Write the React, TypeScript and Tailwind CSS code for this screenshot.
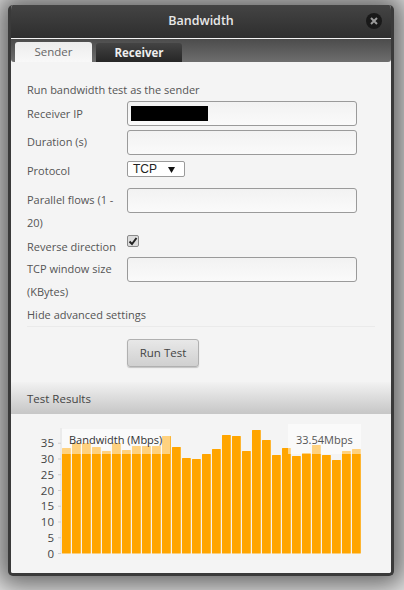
import { ReactNode } from 'react'

const tops = [448, 443, 443, 447, 451, 443, 450, 446, 446, 446, 436, 447, 458, 459, 454, 449, 435, 436, 451, 430, 440, 455, 448, 456, 453, 445, 455, 460, 451, 449]
const ticks = [0, 5, 10, 15, 20, 25, 30, 35]

function Field() {
  return <div className="h-[25px] w-[230px] rounded-[3px] border border-[#9a9a9a] bg-gradient-to-b from-[#f2f2f2] via-[#f6f6f6] to-[#fafafa]" />
}

function Row({ label, children, className }: { label: ReactNode; children: ReactNode; className?: string }) {
  return (
    <div className={`flex items-start ${className ?? ''}`}>
      <div className="w-[100px] shrink-0 pb-px leading-[23px]">{label}</div>
      {children}
    </div>
  )
}

function Chart() {
  return (
    <div className="relative h-[159px] bg-[#f4f4f4]">
      <svg width="380" height="159" viewBox="11 414 380 159" className="block">
        <line x1="61" y1="428" x2="61" y2="554" stroke="#e2e2e2" />
        {ticks.map((t) => {
          const y = 553.5 - t * 3.15
          return (
            <g key={t}>
              <line x1="58" y1={y} x2="61" y2={y} stroke="#cfcfcf" />
              <text x="54" y={y + 4} textAnchor="end" fontSize="11.5" fill="#444" fontFamily="Open Sans, sans-serif">
                {t}
              </text>
            </g>
          )
        })}
        {tops.map((top, i) => (
          <rect key={i} x={62 + i * 10} y={top} width="8.8" height={553.5 - top} rx="0.6" fill="#ffa500" />
        ))}
      </svg>
      <div className="absolute left-[51px] top-[15px] h-[25px] w-[108px] bg-white/50 pl-[7px] pt-[2px] text-[11px] leading-[18px] text-[#333]">
        Bandwidth (Mbps)
      </div>
      <div className="absolute left-[277px] top-[10px] h-[30px] w-[73px] bg-white/50 pl-[8px] pt-[7px] text-[11px] leading-[18px] text-[#555]">
        33.54Mbps
      </div>
    </div>
  )
}

export default function App() {
  return (
    <div className="h-[590px] w-[404px] overflow-hidden bg-[#e6e6e6] pl-[8px] pt-[5px] font-['Open_Sans',sans-serif] text-[11px] text-[#555]">
      <div className="h-[571px] w-[386px] overflow-hidden rounded-[5px] border-[3px] border-t-0 border-[#3a3a3a] bg-[#f4f4f4] shadow-[0_0_26px_10px_rgba(0,0,0,0.55)]">
        <div className="relative -mx-[3px] flex h-[33px] items-center justify-center bg-gradient-to-b from-[#444444] to-[#2e2e2e] text-[12.5px] font-semibold text-[#e8e8e8]">
          Bandwidth
          <div className="absolute right-[12px] top-[8px] flex h-4 w-4 items-center justify-center rounded-full bg-[#191919]">
            <svg width="8" height="8" viewBox="0 0 8 8" fill="none" stroke="#9a9a9a" strokeWidth="2">
              <path d="M1 1l6 6M7 1L1 7" />
            </svg>
          </div>
        </div>
        <div className="flex h-[24px] items-end gap-[4px] rounded-b-[3px] border-t border-[#f2f2f2] bg-gradient-to-b from-[#4c4c4c] to-[#6e6e6e] pl-[4px]">
          <div className="flex h-[20px] w-[77px] items-center justify-center rounded-t-[3px] bg-gradient-to-b from-[#ececec] to-[#f8f8f8] text-[11.5px] text-[#666]">
            Sender
          </div>
          <div className="flex h-[19px] w-[86px] items-center justify-center rounded-t-[3px] bg-gradient-to-b from-[#444444] to-[#262626] text-[11.5px] font-bold text-[#eeeeee]">
            Receiver
          </div>
        </div>

        <div className="pl-[16px] pr-[16px]">
          <div className="pt-[17px] leading-[22px]">Run bandwidth test as the sender</div>
          <Row label={<span className="leading-[25px]">Receiver IP</span>} className="h-[25px]">
            <div className="relative">
              <Field />
              <div className="absolute left-[4px] top-[5px] h-[15px] w-[77px] bg-black" />
            </div>
          </Row>
          <Row label="Duration (s)" className="mt-[4px]">
            <Field />
          </Row>
          <Row label="Protocol" className="mt-[4px]">
            <div className="mt-[2px] flex h-[16px] w-[58px] items-center justify-between rounded-[2px] border border-[#9a9a9a] bg-white pl-[5px] pr-[9px] font-['Liberation_Sans',sans-serif] text-[12px] text-[#222]">
              TCP
              <svg width="7" height="7" viewBox="0 0 7 7" fill="#111">
                <path d="M0 1h7L3.5 7z" />
              </svg>
            </div>
          </Row>
          <Row label={<>Parallel flows (1 -<br />20)</>} className="mt-[5px]">
            <Field />
          </Row>
          <Row label="Reverse direction" className="h-[22px]">
            <div className="flex h-[12px] w-[12px] items-center justify-center rounded-[2px] border border-[#8a8a8a] bg-[#dcdcdc]">
              <svg width="10" height="10" viewBox="0 0 10 10" fill="none" stroke="#222" strokeWidth="2">
                <path d="M1.5 5.5l2.5 2.5 4.5-6" />
              </svg>
            </div>
          </Row>
          <Row label={<>TCP window size<br />(KBytes)</>}>
            <Field />
          </Row>
          <div className="border-b border-[#eaeaea] leading-[22px]">Hide advanced settings</div>
          <div className="ml-[100px] mt-[12px] flex h-[28px] w-[72px] items-center justify-center rounded-[3px] border border-[#b0b0b0] bg-gradient-to-b from-[#e8e8e8] to-[#d0d0d0] text-[11.5px] text-[#444] shadow-[0_1px_1px_rgba(0,0,0,0.2)]">
            Run Test
          </div>
        </div>

        <div className="mt-[15px] flex h-[32px] items-center bg-gradient-to-b from-[#f2f2f2] to-[#c6c6c6] pl-[16px] pt-[1px] text-[11.5px] text-[#444]">
          Test Results
        </div>
        <Chart />
      </div>
    </div>
  )
}
